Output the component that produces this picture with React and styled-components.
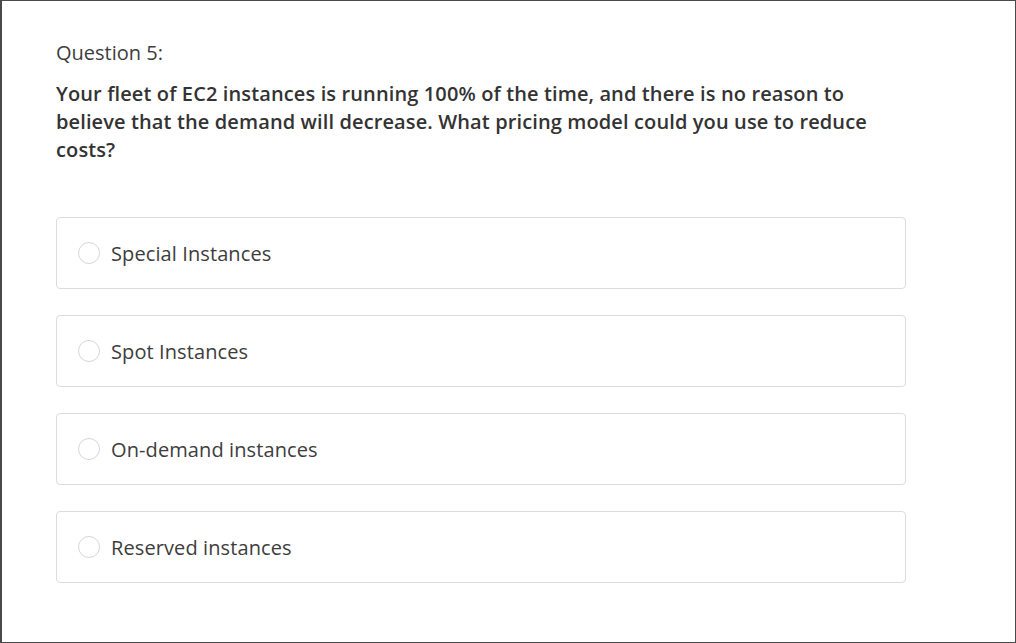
import React from "react";
import styled, { createGlobalStyle } from "styled-components";

const Global = createGlobalStyle`
  html, body { margin: 0; padding: 0; background: #fff; }
  * { box-sizing: border-box; }
`;

const Frame = styled.div`
  width: 1016px;
  height: 643px;
  border: 1px solid #4a4a4a;
  border-left-width: 2px;
  background: #fff;
  font-family: "Open Sans", "Liberation Sans", sans-serif;
  padding: 38px 0 0 54px;
`;

const Column = styled.div`
  width: 850px;
  display: flex;
  flex-direction: column;
`;

const Label = styled.div`
  font-size: 20px;
  line-height: 28px;
  color: #3d3d3d;
  margin-bottom: 13px;
`;

const Prompt = styled.div`
  font-size: 20px;
  line-height: 28px;
  font-weight: 600;
  letter-spacing: 0.12px;
  color: #333;
  margin-bottom: 53px;
`;

const Options = styled.div`
  display: flex;
  flex-direction: column;
  gap: 26px;
`;

const Option = styled.label`
  height: 72px;
  border: 1px solid #dcdcdc;
  border-radius: 4px;
  display: flex;
  align-items: center;
  padding-left: 21px;
  gap: 11px;
  cursor: pointer;
  font-size: 20px;
  letter-spacing: 0.1px;
  color: #3d3d3d;
`;

const Radio = styled.span`
  width: 22px;
  height: 22px;
  border-radius: 50%;
  border: 1px solid #d6d6d6;
  background: #fff;
  flex: none;
`;

const options = [
  "Special Instances",
  "Spot Instances",
  "On-demand instances",
  "Reserved instances",
];

export default function App() {
  return (
    <>
      <Global />
      <Frame>
        <Column>
          <Label>Question 5:</Label>
          <Prompt>
            Your fleet of EC2 instances is running 100% of the time, and there is no reason to
            believe that the demand will decrease. What pricing model could you use to reduce
            costs?
          </Prompt>
          <Options>
            {options.map((o) => (
              <Option key={o}>
                <Radio />
                {o}
              </Option>
            ))}
          </Options>
        </Column>
      </Frame>
    </>
  );
}
